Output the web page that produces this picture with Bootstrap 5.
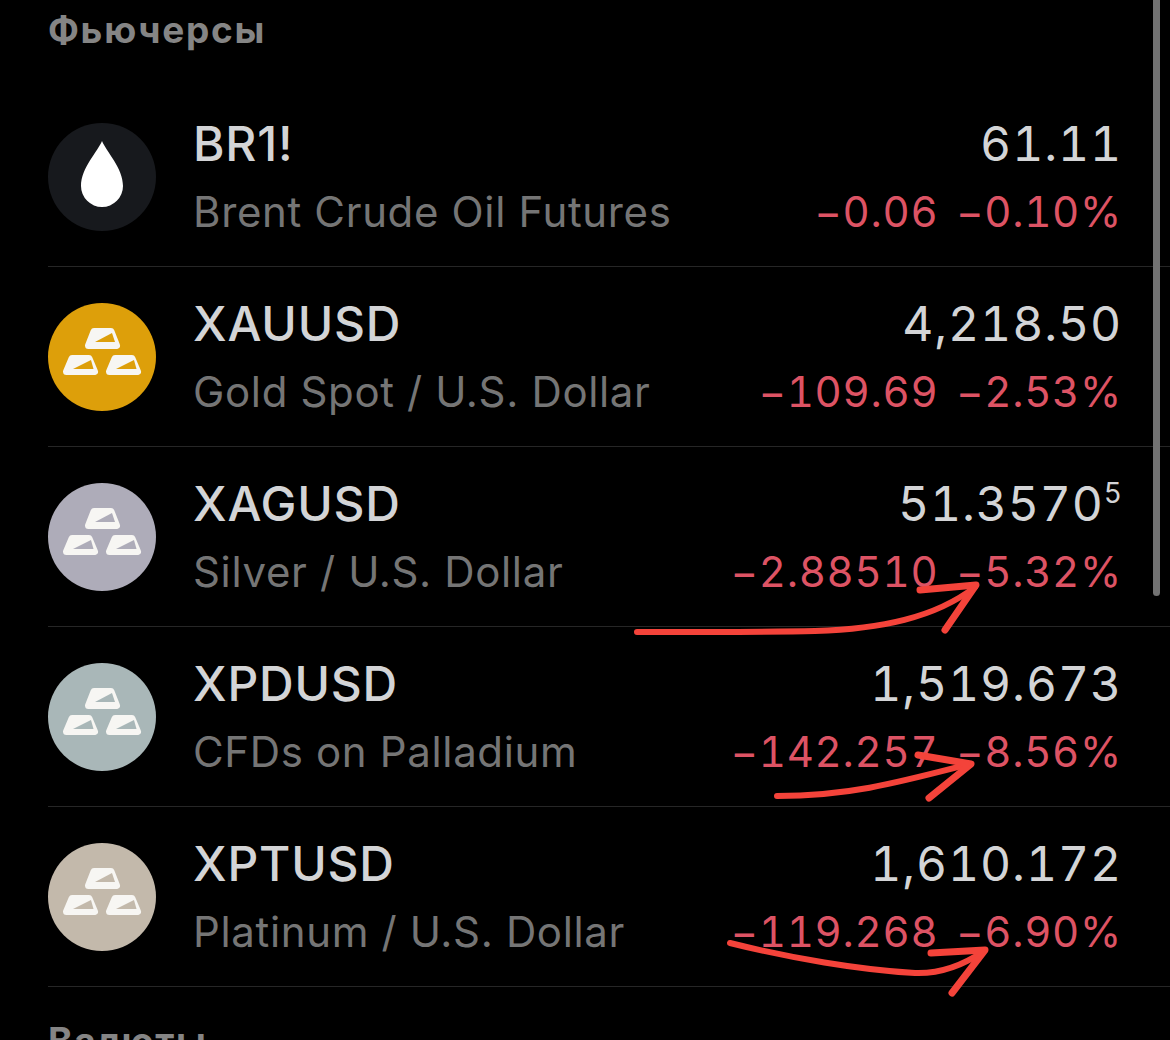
<!DOCTYPE html>
<html lang="ru" data-bs-theme="dark">
<head>
<meta charset="UTF-8" />
<meta name="viewport" content="width=device-width, initial-scale=1.0"/>
<title>Фьючерсы</title>
<link href="https://cdn.jsdelivr.net/npm/bootstrap@5.3.0/dist/css/bootstrap.min.css" rel="stylesheet">
<style>
  html, body {
    height: 1040px;
    overflow: hidden;
    background-color: #000;
  }
  body {
    font-family: Inter, "Noto Sans", sans-serif;
    position: relative;
  }
  .sheet {
    padding: 10px 0 0 48px;
  }
  .section-title {
    font-size: 37px;
    line-height: 40px;
    font-weight: 700;
    letter-spacing: 1.7px;
    color: #858585;
    margin: 0;
  }
  .quote-list {
    --bs-list-group-bg: transparent;
    --bs-list-group-border-color: #262626;
    --bs-list-group-border-radius: 0;
    margin-top: 37px;
  }
  .quote-row {
    height: 180px;
    padding: 0 48px 0 0;
    border-width: 0 0 1px 0;
    gap: 37px;
  }
  .coin {
    width: 108px;
    height: 108px;
    flex: none;
  }
  .ticker, .price {
    font-size: 48px;
    line-height: 56px;
    color: #d3d4d6;
    margin-top: 2px;
  }
  .ticker {
    font-weight: 500;
    letter-spacing: .8px;
  }
  .price {
    font-variant-numeric: tabular-nums;
    letter-spacing: .9px;
  }
  .full-name {
    font-size: 42px;
    line-height: 56px;
    letter-spacing: .65px;
    color: #757575;
    margin-top: 12px;
  }
  .change {
    font-size: 42px;
    line-height: 56px;
    font-variant-numeric: tabular-nums;
    letter-spacing: .7px;
    color: #dd5364;
    margin-top: 12px;
    gap: 18px;
  }
  .price sup {
    font-size: 28px;
    top: -.62em;
    letter-spacing: 0;
  }
  .section-next {
    margin-top: 34px;
  }
  .scroll-thumb {
    position: absolute;
    top: 0;
    left: 1153px;
    width: 7px;
    height: 596px;
    border-radius: 0 0 4px 4px;
    background-color: #727272;
  }
  .marks {
    position: absolute;
    top: 0;
    left: 0;
    pointer-events: none;
  }
</style>
</head>
<body>
<svg width="0" height="0" class="d-block">
  <symbol id="bars" viewBox="0 0 108 108">
    <path d="M46 28.5H63L68.5 42.5H40.5Z" fill="#f7f6f3" stroke="#f7f6f3" stroke-width="7" stroke-linejoin="round"/>
    <path d="M47 39L64 30L67 39Z" fill="currentColor"/>
    <path d="M24 55.5H41L46.5 68.5H18.5Z" fill="#f7f6f3" stroke="#f7f6f3" stroke-width="7" stroke-linejoin="round"/>
    <path d="M25 66L43 57L45.5 66Z" fill="currentColor"/>
    <path d="M67 55.5H84L89.5 68.5H61.5Z" fill="#f7f6f3" stroke="#f7f6f3" stroke-width="7" stroke-linejoin="round"/>
    <path d="M68 66L86 57L88.5 66Z" fill="currentColor"/>
  </symbol>
</svg>

<div class="sheet">
  <h2 class="section-title">Фьючерсы</h2>
  <ul class="list-group quote-list">
    <li class="list-group-item quote-row d-flex align-items-center">
      <svg class="coin" viewBox="0 0 108 108">
        <circle cx="54" cy="54" r="54" fill="#17191d"/>
        <path d="M54 18C58 28 75 45 75 63A21 21 0 0 1 33 63C33 45 50 28 54 18Z" fill="#fff"/>
      </svg>
      <div class="flex-grow-1">
        <div class="ticker">BR1!</div>
        <div class="full-name">Brent Crude Oil Futures</div>
      </div>
      <div class="text-end">
        <div class="price">61.11</div>
        <div class="change d-flex justify-content-end"><span>−0.06</span><span>−0.10%</span></div>
      </div>
    </li>
    <li class="list-group-item quote-row d-flex align-items-center">
      <svg class="coin" viewBox="0 0 108 108" color="#dd9f0a">
        <circle cx="54" cy="54" r="54" fill="currentColor"/>
        <use href="#bars"/>
      </svg>
      <div class="flex-grow-1">
        <div class="ticker">XAUUSD</div>
        <div class="full-name">Gold Spot / U.S. Dollar</div>
      </div>
      <div class="text-end">
        <div class="price">4,218.50</div>
        <div class="change d-flex justify-content-end"><span>−109.69</span><span>−2.53%</span></div>
      </div>
    </li>
    <li class="list-group-item quote-row d-flex align-items-center">
      <svg class="coin" viewBox="0 0 108 108" color="#aeacb9">
        <circle cx="54" cy="54" r="54" fill="currentColor"/>
        <use href="#bars"/>
      </svg>
      <div class="flex-grow-1">
        <div class="ticker">XAGUSD</div>
        <div class="full-name">Silver / U.S. Dollar</div>
      </div>
      <div class="text-end">
        <div class="price">51.3570<sup>5</sup></div>
        <div class="change d-flex justify-content-end"><span>−2.88510</span><span>−5.32%</span></div>
      </div>
    </li>
    <li class="list-group-item quote-row d-flex align-items-center">
      <svg class="coin" viewBox="0 0 108 108" color="#a9b7b8">
        <circle cx="54" cy="54" r="54" fill="currentColor"/>
        <use href="#bars"/>
      </svg>
      <div class="flex-grow-1">
        <div class="ticker">XPDUSD</div>
        <div class="full-name">CFDs on Palladium</div>
      </div>
      <div class="text-end">
        <div class="price">1,519.673</div>
        <div class="change d-flex justify-content-end"><span>−142.257</span><span>−8.56%</span></div>
      </div>
    </li>
    <li class="list-group-item quote-row d-flex align-items-center">
      <svg class="coin" viewBox="0 0 108 108" color="#c3b9ab">
        <circle cx="54" cy="54" r="54" fill="currentColor"/>
        <use href="#bars"/>
      </svg>
      <div class="flex-grow-1">
        <div class="ticker">XPTUSD</div>
        <div class="full-name">Platinum / U.S. Dollar</div>
      </div>
      <div class="text-end">
        <div class="price">1,610.172</div>
        <div class="change d-flex justify-content-end"><span>−119.268</span><span>−6.90%</span></div>
      </div>
    </li>
  </ul>
  <h2 class="section-title section-next">Валюты</h2>
</div>

<div class="scroll-thumb"></div>

<!-- стрелки поверх скриншота -->
<svg class="marks" width="1170" height="1040" viewBox="0 0 1170 1040" fill="none" stroke="#f4433a" stroke-linecap="round" stroke-linejoin="round">
  <path d="M637 632C710 632 770 632 815 631C880 629 935 618 975 587" stroke-width="6"/>
  <path d="M920 590L976 585L945 630" stroke-width="7"/>
  <path d="M777 796C850 796 900 782 970 764" stroke-width="6"/>
  <path d="M918 755L971 764L929 798" stroke-width="7"/>
  <path d="M730 943C790 958 860 970 915 973C945 974 968 962 984 951" stroke-width="6"/>
  <path d="M931 953L985 950L952 993" stroke-width="7"/>
</svg>

<script src="https://cdn.jsdelivr.net/npm/bootstrap@5.3.0/dist/js/bootstrap.bundle.min.js"></script>
</body>
</html>
